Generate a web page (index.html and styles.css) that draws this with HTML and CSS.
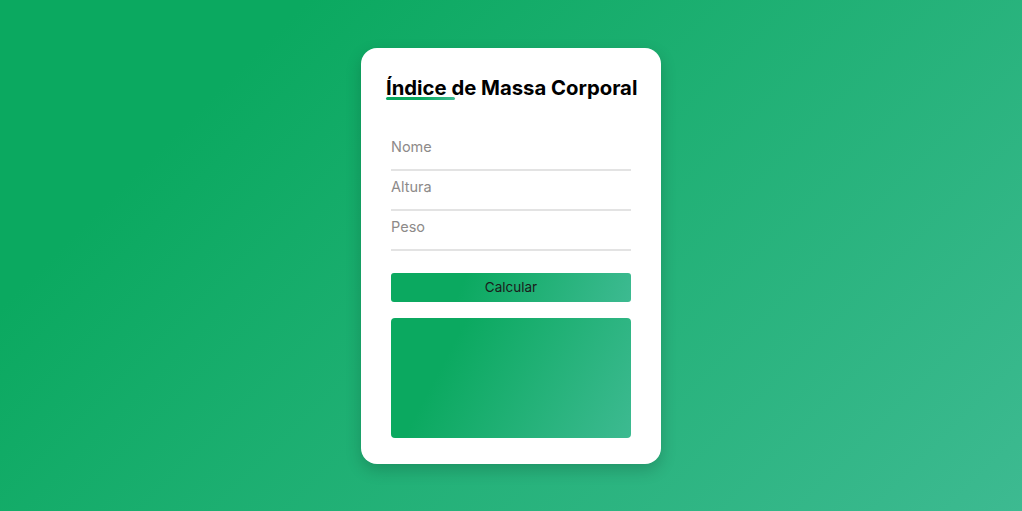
FILE: index.html
```html
<!DOCTYPE html>
<html>
<head lang="pt-BR">
    <meta charset="UTF-8">
    <title>Índice de Massa Corporal</title>

    <link rel="stylesheet" href="styles.css">
</head>
<body>
    <main class="card">
        <h1 class="title"><span class="title-mark">Índice </span>de Massa Corporal</h1>
        <form class="form">
            <input class="field" type="text" placeholder="Nome">
            <input class="field" type="text" placeholder="Altura">
            <input class="field" type="text" placeholder="Peso">
            <button class="btn" type="button">Calcular</button>
        </form>
        <div class="result"></div>
    </main>
</body>
</html>
```

FILE: styles.css
```css
* {
    box-sizing: border-box;
}

body {
    margin: 0;
    height: 100vh;
    display: flex;
    align-items: center;
    justify-content: center;
    font-family: "Inter", "Open Sans", sans-serif;
    background: linear-gradient(135deg, #0ba960 20%, #3dba91);
}

.card {
    width: 300px;
    height: 416px;
    padding: 28px 30px 26px;
    background-color: #fff;
    border-radius: 16px;
    box-shadow: 0 6px 16px rgba(0, 0, 0, .18);
}

.title {
    margin: 0 0 31px -5px;
    font-size: 20.3px;
    line-height: 24px;
    font-weight: 700;
    color: #000;
    white-space: nowrap;
}

.title-mark {
    position: relative;
}

.title-mark::after {
    content: "";
    position: absolute;
    left: 0;
    right: -4px;
    bottom: 0;
    height: 3px;
    border-radius: 2px;
    background: linear-gradient(to right, #0ba960 50%, #3dba91);
}

.form {
    display: flex;
    flex-direction: column;
}

.field {
    height: 40px;
    padding: 0 0 7px;
    border: 0;
    border-bottom: 2px solid #e3e3e3;
    outline: none;
    font-family: inherit;
    font-size: 14.5px;
    color: #333;
}

.field::placeholder {
    color: #8d8a89;
}

.btn {
    margin-top: 22px;
    height: 29px;
    border: 0;
    border-radius: 3px;
    font-family: inherit;
    font-size: 13.5px;
    color: #1b1b1b;
    background: linear-gradient(112deg, #0ba960 30%, #3dba91);
}

.result {
    margin-top: 16px;
    height: 120px;
    border-radius: 4px;
    background: linear-gradient(118deg, #0ba960 25%, #3dba91);
}
```
